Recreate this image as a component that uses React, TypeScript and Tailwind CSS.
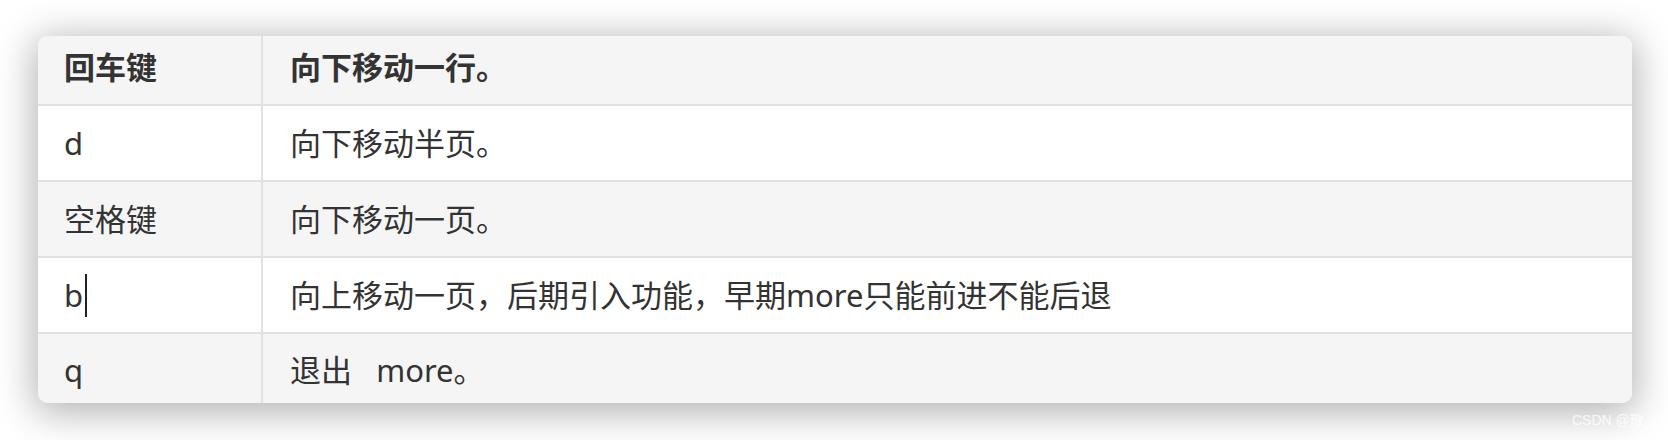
const rows = [
  { key: 'd', desc: '向下移动半页。' },
  { key: '空格键', desc: '向下移动一页。' },
  { key: 'b', desc: '向上移动一页，后期引入功能，早期more只能前进不能后退', cursor: true },
];

export default function App() {
  return (
    <div
      className="relative w-[1668px] h-[440px] bg-white pt-[36px] pl-[38px] text-[#333333]"
      style={{ fontFamily: '"Noto Sans", "Noto Sans CJK SC", sans-serif' }}
    >
      <div className="w-[1594px] h-[367px] rounded-[10px] overflow-hidden bg-white shadow-[0_6px_38px_4px_rgba(0,0,0,0.3)] text-[31px] leading-none">
        {/* header */}
        <div className="flex h-[68px] bg-[#f5f5f5] border-b-2 border-[#dfe2e5] box-content">
          <div className="w-[225px] shrink-0 flex items-center pl-[26px] pb-[5px] font-bold border-r-2 border-[#dfe2e5]">
            回车键
          </div>
          <div className="flex-1 flex items-center pl-[27px] pb-[5px] font-bold">向下移动一行。</div>
        </div>

        {rows.map((r, i) => (
          <div
            key={r.key}
            className={`flex h-[74px] border-b-2 border-[#dfe2e5] box-content ${i % 2 === 1 ? 'bg-[#f5f5f5]' : 'bg-white'}`}
          >
            <div className="w-[225px] shrink-0 flex items-center pl-[26px] border-r-2 border-[#dfe2e5]">
              {r.key}
              {r.cursor && <span className="inline-block w-[2px] h-[43px] bg-[#222] ml-[2px]" />}
            </div>
            <div className="flex-1 flex items-center pl-[27px]">{r.desc}</div>
          </div>
        ))}

        {/* last row */}
        <div className="flex h-[69px] bg-[#f5f5f5]">
          <div className="w-[225px] shrink-0 flex items-center pl-[26px] pt-[3px] border-r-2 border-[#dfe2e5]">
            q
          </div>
          <div className="flex-1 flex items-center pl-[27px] pt-[3px] whitespace-pre">退出   more。</div>
        </div>
      </div>

      <span
        className="absolute left-[1572px] top-[413px] text-[14px] leading-none text-white/80 whitespace-nowrap"
        style={{ fontFamily: '"Liberation Sans", "Noto Sans CJK SC", sans-serif' }}
      >
        CSDN @散_步
      </span>
    </div>
  );
}
